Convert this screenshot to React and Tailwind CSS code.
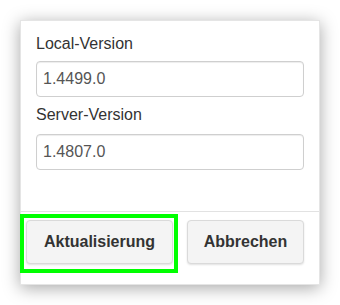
export default function App() {
  return (
    <div
      className="w-[340px] h-[305px] bg-white pt-[20px] pl-[20px]"
      style={{ fontFamily: '"Liberation Sans", Arial, sans-serif' }}
    >
      <div className="w-[300px] h-[265px] bg-white border border-black/10 shadow-[0_3px_16px_rgba(0,0,0,0.35)] flex flex-col">
        <div className="px-[15px] pt-[12px] pb-[41px] flex flex-col">
          <label className="text-[16px] leading-[22px] text-[#333]">Local-Version</label>
          <div className="mt-[6px] h-[36px] border border-[#cfcfcf] rounded-[4px] shadow-[inset_0_1px_1px_rgba(0,0,0,0.075)] flex items-center pl-[6px] text-[16px] text-[#555]">
            1.4499.0
          </div>
          <label className="mt-[7px] text-[16px] leading-[22px] text-[#333]">Server-Version</label>
          <div className="mt-[8px] h-[36px] border border-[#cfcfcf] rounded-[4px] shadow-[inset_0_1px_1px_rgba(0,0,0,0.075)] flex items-center pl-[6px] text-[16px] text-[#555]">
            1.4807.0
          </div>
        </div>
        <div className="border-t border-[#e2e2e2] pt-[2px] pb-[12px] flex items-start -ml-px">
          <div className="border-4 border-[#00ff00] pt-[2px] pl-[2px] pr-[1px] pb-[5px]">
            <button className="w-[147px] h-[44px] bg-[#f4f4f4] border border-[#dadada] rounded-[4px] shadow-[0_1px_2px_rgba(0,0,0,0.12)] text-[16px] font-bold text-[#333] flex items-center justify-center">
              Aktualisierung
            </button>
          </div>
          <button className="ml-[9px] mt-[6px] w-[117px] h-[44px] bg-[#f4f4f4] border border-[#dadada] rounded-[4px] shadow-[0_1px_2px_rgba(0,0,0,0.12)] text-[16px] font-bold text-[#333] flex items-center justify-center">
            Abbrechen
          </button>
        </div>
      </div>
    </div>
  );
}
